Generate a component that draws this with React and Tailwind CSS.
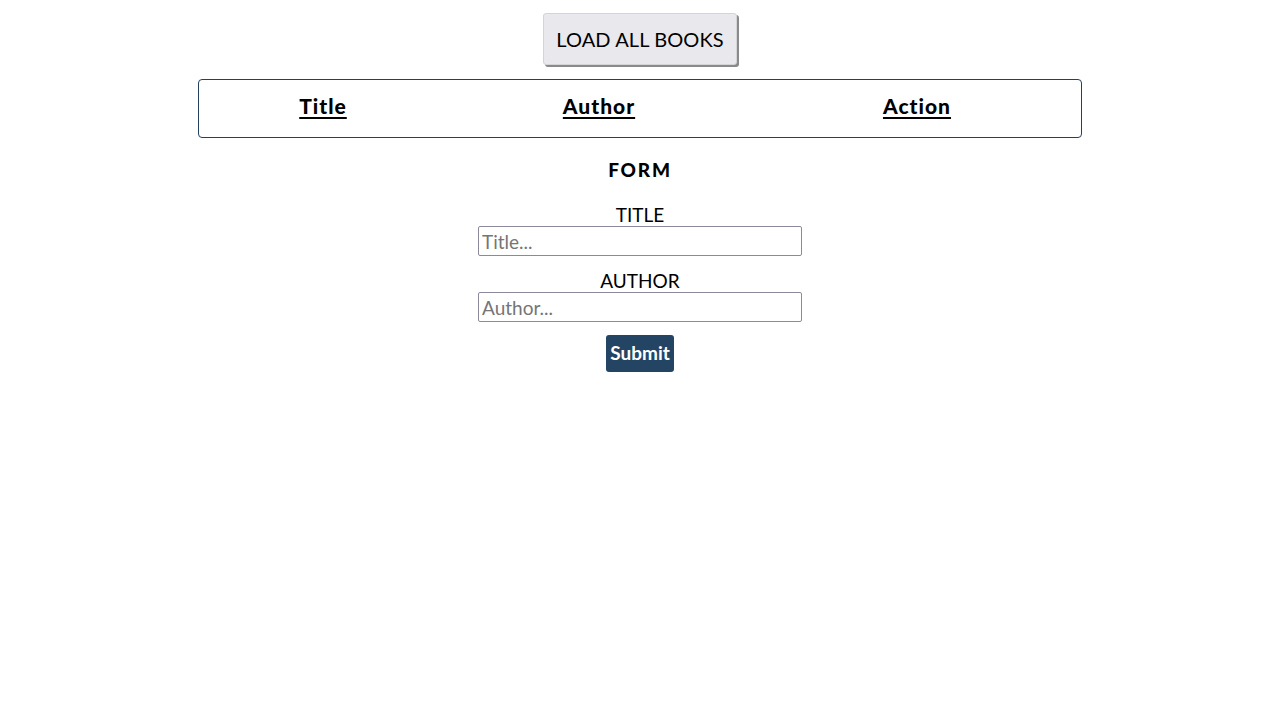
export default function App() {
  return (
    <div className="min-h-screen bg-white text-black flex flex-col items-center" style={{ fontFamily: 'Lato, "Open Sans", sans-serif' }}>
      <button className="mt-[13px] h-[52px] px-[12px] bg-[#e9e8ec] rounded-[3px] border border-[#d4d3d8] shadow-[2px_2px_0_#8a8a8a] text-[20px] tracking-[0.1px]">
        LOAD ALL BOOKS
      </button>

      <div className="mt-[14px] w-[884px] h-[59px] pb-[6px] border border-[#23405f] rounded-[4px] grid grid-cols-[248px_304px_332px] items-center">
        <div className="text-center text-[21px] font-black tracking-[1px] underline underline-offset-[3px] decoration-2">Title</div>
        <div className="text-center text-[21px] font-black tracking-[1px] underline underline-offset-[3px] decoration-2">Author</div>
        <div className="text-center text-[21px] font-black tracking-[1px] underline underline-offset-[3px] decoration-2">Action</div>
      </div>

      <h2 className="mt-[20px] text-[19px] font-black tracking-[1.8px] leading-[24px]">FORM</h2>

      <form className="mt-[22px] flex flex-col items-center">
        <label className="text-[19px] leading-[22px]">TITLE</label>
        <input
          placeholder="Title..."
          className="w-[324px] h-[30px] border border-[#8a8a9a] rounded-[2px] px-[3px] text-[19px] placeholder:text-[#757575] outline-none"
        />
        <label className="mt-[14px] text-[19px] leading-[22px]">AUTHOR</label>
        <input
          placeholder="Author..."
          className="w-[324px] h-[30px] border border-[#8a8a9a] rounded-[2px] px-[3px] text-[19px] placeholder:text-[#757575] outline-none"
        />
        <button type="button" className="mt-[13px] h-[37px] px-[4px] bg-[#244463] text-white font-bold text-[19px] rounded-[3px]">
          Submit
        </button>
      </form>
    </div>
  )
}
